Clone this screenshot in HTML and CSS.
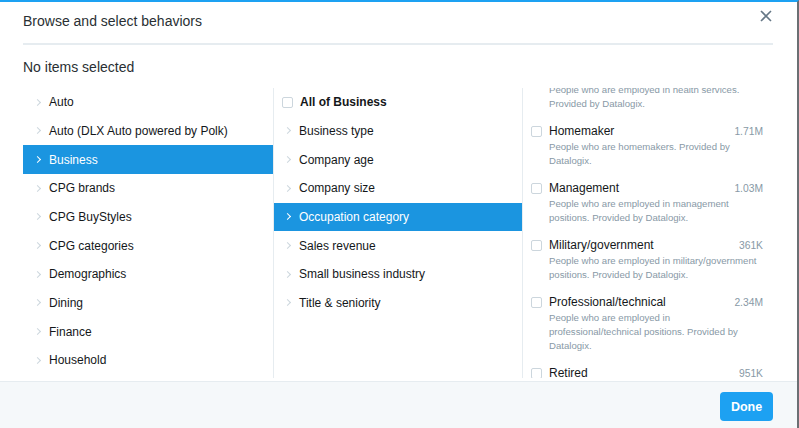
FILE: index.html
```html
<!DOCTYPE html>
<html lang="en">
<head>
  <meta charset="UTF-8">
  <title>Browse and select behaviors</title>
  <link rel="stylesheet" href="styles.css">
</head>
<body>
  <div class="modal">
    <div class="modal-header">
      <h1>Browse and select behaviors</h1>
      <button class="close" aria-label="Close">
        <svg width="12" height="12" viewBox="0 0 12 12"><path d="M1 1L11 11M11 1L1 11" stroke="#657786" stroke-width="1.6" fill="none"/></svg>
      </button>
    </div>
    <div class="status">No items selected</div>

    <div class="columns">
      <ul class="col">
        <li><span class="chev"></span>Auto</li>
        <li><span class="chev"></span>Auto (DLX Auto powered by Polk)</li>
        <li class="active"><span class="chev"></span>Business</li>
        <li><span class="chev"></span>CPG brands</li>
        <li><span class="chev"></span>CPG BuyStyles</li>
        <li><span class="chev"></span>CPG categories</li>
        <li><span class="chev"></span>Demographics</li>
        <li><span class="chev"></span>Dining</li>
        <li><span class="chev"></span>Finance</li>
        <li><span class="chev"></span>Household</li>
      </ul>

      <ul class="col sub">
        <li class="all"><span class="box"></span>All of Business</li>
        <li><span class="chev"></span>Business type</li>
        <li><span class="chev"></span>Company age</li>
        <li><span class="chev"></span>Company size</li>
        <li class="active"><span class="chev"></span>Occupation category</li>
        <li><span class="chev"></span>Sales revenue</li>
        <li><span class="chev"></span>Small business industry</li>
        <li><span class="chev"></span>Title &amp; seniority</li>
      </ul>

      <div class="col leaves">
        <div class="leaf-list">
          <div class="leaf">
            <div class="leaf-top"><span class="box"></span><span class="name">Health services</span><span class="count">1.12M</span></div>
            <p>People who are employed in health services. Provided by Datalogix.</p>
          </div>
          <div class="leaf">
            <div class="leaf-top"><span class="box"></span><span class="name">Homemaker</span><span class="count">1.71M</span></div>
            <p>People who are homemakers. Provided by Datalogix.</p>
          </div>
          <div class="leaf">
            <div class="leaf-top"><span class="box"></span><span class="name">Management</span><span class="count">1.03M</span></div>
            <p>People who are employed in management positions. Provided by Datalogix.</p>
          </div>
          <div class="leaf">
            <div class="leaf-top"><span class="box"></span><span class="name">Military/government</span><span class="count">361K</span></div>
            <p>People who are employed in military/government positions. Provided by Datalogix.</p>
          </div>
          <div class="leaf">
            <div class="leaf-top"><span class="box"></span><span class="name">Professional/technical</span><span class="count">2.34M</span></div>
            <p>People who are employed in professional/technical positions. Provided by Datalogix.</p>
          </div>
          <div class="leaf">
            <div class="leaf-top"><span class="box"></span><span class="name">Retired</span><span class="count">951K</span></div>
            <p>People who are retired. Provided by Datalogix.</p>
          </div>
        </div>
      </div>
    </div>

    <div class="modal-footer">
      <button class="done">Done</button>
    </div>
  </div>
</body>
</html>
```

FILE: styles.css
```css
* {
  box-sizing: border-box;
}
body {
  margin: 0;
  font-family: "Liberation Sans", Arial, sans-serif;
  color: #14171a;
  background: #fff;
}
.modal {
  height: 428px;
  border-top: 2px solid #1da1f2;
  border-right: 2px solid #6b6f73;
  display: flex;
  flex-direction: column;
  overflow: hidden;
}
.modal-header {
  margin: 0 24px 0 23px;
  height: 43px;
  border-bottom: 2px solid #e6ecf0;
  display: flex;
  align-items: center;
  justify-content: space-between;
  padding-bottom: 4px;
}
.modal-header h1 {
  margin: 0;
  font-size: 14px;
  font-weight: normal;
  color: #292f33;
}
.close {
  align-self: flex-start;
  border: none;
  background: none;
  padding: 0;
  margin: 8px 1px 0 0;
  width: 12px;
  height: 12px;
  cursor: pointer;
}
.close svg {
  display: block;
}
.status {
  margin: 0 23px;
  height: 43px;
  line-height: 45px;
  font-size: 14px;
  color: #292f33;
}
.columns {
  display: grid;
  grid-template-columns: 251px 249px 250px;
  margin-left: 23px;
  height: 290px;
  overflow: hidden;
}
.col {
  list-style: none;
  margin: 0;
  padding: 0;
  font-size: 12px;
  border-right: 1px solid #e6ecf0;
}
.col:last-child {
  border-right: none;
}
.col li {
  height: 28.67px;
  display: flex;
  align-items: center;
  padding-left: 12px;
  white-space: nowrap;
}
.sub li {
  padding-left: 11px;
}
.col li.active {
  background: #1b95e0;
  color: #fff;
}
.chev {
  width: 5px;
  height: 5px;
  border-top: 1px solid #ccd6dd;
  border-right: 1px solid #ccd6dd;
  transform: rotate(45deg);
  margin: 0 9px 0 0;
}
.active .chev {
  border-color: #fff;
}
.box {
  width: 11px;
  height: 11px;
  border: 1px solid #ccd6dd;
  border-radius: 2px;
  background: #fff;
  flex: none;
}
.col li.all {
  padding-left: 8px;
  font-weight: bold;
}
.col li.all .box {
  margin-right: 7px;
}
.leaves {
  overflow: hidden;
}
.leaf-list {
  margin-top: -28.5px;
}
.leaf {
  padding: 6px 10px 6px 8px;
}
.leaf-top {
  display: flex;
  align-items: center;
  height: 17px;
  font-size: 12px;
}
.leaf-top .box {
  margin-right: 7px;
}
.leaf-top .name {
  flex: 1;
}
.leaf-top .count {
  font-size: 10.3px;
  color: #8899a6;
}
.leaf p {
  margin: 0 0 0 18px;
  font-size: 9.6px;
  line-height: 14px;
  color: #8899a6;
  max-width: 212px;
}
.modal-footer {
  margin-top: 3px;
  flex: 1;
  background: #f5f8fa;
  border-top: 1px solid #e6ecf0;
  display: flex;
  justify-content: flex-end;
  align-items: flex-start;
  padding: 10px 24px 0 0;
}
.done {
  width: 53px;
  height: 29px;
  border: none;
  border-radius: 4px;
  background: #1da1f2;
  color: #fff;
  font-family: inherit;
  font-size: 12.5px;
  font-weight: bold;
  cursor: pointer;
}
```
